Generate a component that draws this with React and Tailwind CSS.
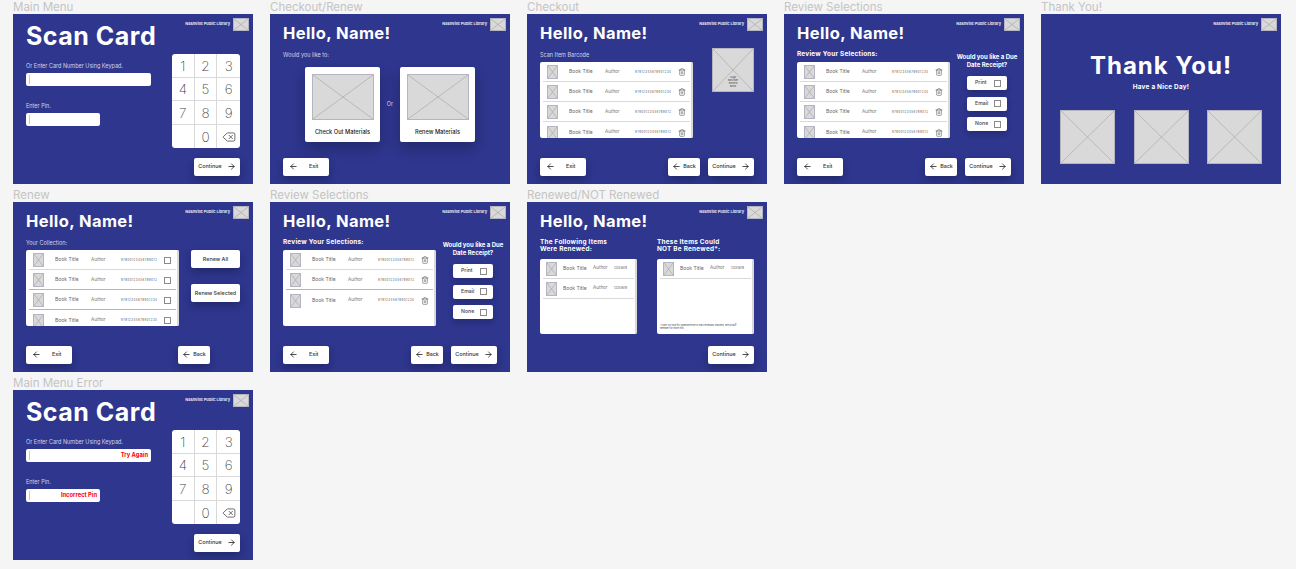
import { ArrowLeft, ArrowRight, Delete, Trash2 } from "lucide-react";

// gray box with a cross, the wireframe stand-in for an image
const Placeholder = ({ className = "" }) => (
    <div className={`relative shrink-0 bg-[#d9d9d9] border-[0.5px] border-[#b4b4c2] ${className}`}>
        <svg className="absolute inset-0 w-full h-full" viewBox="0 0 100 100" preserveAspectRatio="none">
            <path d="M0 0L100 100M100 0L0 100" stroke="#999" strokeWidth="0.5" vectorEffect="non-scaling-stroke" fill="none" />
        </svg>
    </div>
);

const Frame = ({ label, children }) => (
    <div>
        <div className="h-[13.5px] text-[11.5px] leading-[14px] text-[#c4c4c4] whitespace-nowrap">{label}</div>
        <div className="w-[240px] h-[170px] bg-[#2e368e] flex flex-col overflow-hidden">{children}</div>
    </div>
);

const Header = ({ title, big }) => (
    <div className="h-[36px] shrink-0 flex justify-between items-start pt-[4px] pr-[4px] pl-[13px]">
        {title ? (
            <h1 className={`font-bold text-white whitespace-nowrap ${big ? "mt-[5px] text-[25px] leading-[26px] tracking-[0.5px]" : "mt-[2.5px] text-[16.5px] leading-[26px] tracking-[0.4px]"}`}>
                {title}
            </h1>
        ) : (
            <span />
        )}
        <div className="flex items-center gap-[3px]">
            <span className="text-[3.9px] font-bold text-[#e4e5f2] whitespace-nowrap">Nashville Public Library</span>
            <Placeholder className="w-[16px] h-[13px]" />
        </div>
    </div>
);

const Btn = ({ children, className = "" }) => (
    <div className={`h-[18px] bg-white rounded-[2px] shadow-[0_4px_8px_rgba(0,0,0,0.25)] flex items-center text-[5.4px] font-medium text-[#333] whitespace-nowrap ${className}`}>
        {children}
    </div>
);

const Exit = () => (
    <Btn className="w-[46px] pl-[6px] gap-[11px]">
        <ArrowLeft size={9} strokeWidth={2} color="#111" />
        Exit
    </Btn>
);

const Back = () => (
    <Btn className="w-[32px] justify-center gap-[2px]">
        <ArrowLeft size={9} strokeWidth={2} color="#111" />
        Back
    </Btn>
);

const Continue = () => (
    <Btn className="w-[46px] justify-center gap-[5px]">
        Continue
        <ArrowRight size={9} strokeWidth={2} color="#111" />
    </Btn>
);

const Footer = ({ left, children }) => (
    <div className="h-[34px] shrink-0 px-[13px] pt-[8px] mt-auto flex justify-between">
        {left ? <Exit /> : <span />}
        <div className="flex gap-[8px]">{children}</div>
    </div>
);

const Label = ({ children, className = "" }) => (
    <p className={`text-[5.5px] leading-[6px] text-[#d4d5e8] whitespace-nowrap ${className}`}>{children}</p>
);

const Heading = ({ children, className = "" }) => (
    <p className={`text-[6.4px] font-bold text-white tracking-[0.25px] whitespace-nowrap ${className}`}>{children}</p>
);

const Check = () => <div className="w-[7px] h-[7px] bg-white border-[0.5px] border-[#8a8a8a] shrink-0" />;

const ListRow = ({ end, code, strong, noLine }) => (
    <div className={`h-[20px] shrink-0 pt-[1px] flex items-center pl-[4px] ${noLine ? "" : strong ? "border-b border-[#b5b5b5]" : "border-b border-[#d9d9d9]"}`}>
        <Placeholder className="w-[11px] h-[14px]" />
        <span className="w-[22px] ml-[11px] mr-[14px] text-[5px] text-[#666] whitespace-nowrap">Book Title</span>
        <span className="w-[16px] mr-[14px] text-[4.6px] text-[#777] whitespace-nowrap">Author</span>
        <span className="w-[37px] mr-[6px] text-[2.8px] tracking-[0.5px] text-[#555] whitespace-nowrap">{code}</span>
        {end === "check" ? <Check /> : <Trash2 size={8} strokeWidth={1.4} color="#333" />}
    </div>
);

const List = ({ children, className = "" }) => (
    <div className={`bg-white rounded-[2px] overflow-hidden flex shrink-0 ${className}`}>
        <div className="flex-1 min-w-0 flex flex-col pl-[3px] pr-[1px]">{children}</div>
        <div className="w-[2px] bg-[#d9d9d9]" />
    </div>
);

const codeA = "97812345678901234";
const codeB = "97800123456789012";

const ScanCard = ({ error }) => (
    <>
        <Header title="Scan Card" big />
        <div className="flex-1 min-h-0 px-[13px] flex justify-between items-start">
            <div className="pt-[13.5px]">
                <Label>Or Enter Card Number Using Keypad.</Label>
                <div className="w-[125px] h-[13px] mt-[4px] bg-white rounded-[2px] flex items-center justify-between pl-[3px] pr-[3px]">
                    <div className="w-[1px] h-[9px] bg-[#c8c8c8]" />
                    {error && <span className="text-[5.8px] font-bold text-[#ff0000]">Try Again</span>}
                </div>
                <Label className="mt-[17px]">Enter Pin.</Label>
                <div className="w-[74px] h-[13px] mt-[4px] bg-white rounded-[2px] flex items-center justify-between pl-[3px] pr-[3px]">
                    <div className="w-[1px] h-[9px] bg-[#c8c8c8]" />
                    {error && <span className="text-[5.8px] font-bold text-[#ff0000]">Incorrect Pin</span>}
                </div>
            </div>
            <div className="mt-[4.5px] w-[68px] h-[94px] bg-white rounded-[3px] overflow-hidden grid grid-cols-3 grid-rows-4">
                {["1", "2", "3", "4", "5", "6", "7", "8", "9", "", "0", "x"].map((k, i) => (
                    <div key={i} className={`flex items-center justify-center pt-[1.5px] text-[13.5px] font-extralight text-[#444] border-[#d9d9d9] ${i % 3 !== 2 ? "border-r-[0.5px]" : ""} ${i < 9 ? "border-b-[0.5px]" : ""}`}>
                        {k === "x" ? <Delete size={14} strokeWidth={1.2} color="#333" /> : k}
                    </div>
                ))}
            </div>
        </div>
        <Footer>
            <Continue />
        </Footer>
    </>
);

const PickCard = ({ text }) => (
    <div className="w-[75px] h-[75px] bg-white rounded-[2px] shadow-[0_6px_14px_rgba(0,0,0,0.25)] px-[6.5px] pt-[6.5px] flex flex-col items-center">
        <Placeholder className="w-[62px] h-[46px]" />
        <span className="mt-[8px] text-[5.7px] font-medium text-[#222] whitespace-nowrap">{text}</span>
    </div>
);

const ReceiptOption = ({ text }) => (
    <div className="w-[40px] h-[14px] bg-white rounded-[2px] shadow-[0_3px_6px_rgba(0,0,0,0.2)] flex items-center justify-between pl-[8px] pr-[6px] text-[5.2px] font-medium text-[#444]">
        {text}
        <Check />
    </div>
);

const Receipt = () => (
    <div className="w-[62px] -mr-[7px] pt-[3px] flex flex-col items-center">
        <Heading className="text-center text-[6px] tracking-normal leading-[8px]">
            Would you like a Due
            <br />
            Date Receipt?
        </Heading>
        <div className="mt-[7.5px] flex flex-col gap-[6.5px]">
            <ReceiptOption text="Print" />
            <ReceiptOption text="Email" />
            <ReceiptOption text="None" />
        </div>
    </div>
);

const ReviewBody = ({ children }) => (
    <div className="h-[104px] px-[13px] flex justify-between items-start">
        <div className="pt-[1.5px]">
            <Heading className="h-[11px] leading-[7.5px]">Review Your Selections:</Heading>
            <List className="w-[153px] h-[76px]">{children}</List>
        </div>
        <Receipt />
    </div>
);

const RenewedRow = ({ code }) => (
    <div className="h-[20px] shrink-0 pt-[1px] flex items-center pl-[3px] border-b border-[#d9d9d9]">
        <Placeholder className="w-[11px] h-[14px]" />
        <span className="w-[22px] ml-[6px] mr-[8px] text-[5px] text-[#666] whitespace-nowrap">Book Title</span>
        <span className="w-[13px] mr-[8px] text-[4.6px] text-[#777] whitespace-nowrap">Author</span>
        <span className="w-[15px] text-[2.8px] text-[#555] whitespace-nowrap">{code}</span>
    </div>
);

export default function App() {
    return (
        <div className="w-[1296px] h-[569px] overflow-hidden bg-[#f5f5f5] pl-[13px] antialiased [font-family:Inter,sans-serif]">
            <div className="grid grid-cols-[repeat(5,240px)] gap-x-[17px] gap-y-[4.5px] items-start">
                <Frame label="Main Menu">
                    <ScanCard />
                </Frame>

                <Frame label="Checkout/Renew">
                    <Header title="Hello, Name!" />
                    <div className="flex-1 min-h-0 px-[13px]">
                        <Label className="mt-[2.5px]">Would you like to:</Label>
                        <div className="mt-[9px] flex items-center justify-center gap-[6px]">
                            <PickCard text="Check Out Materials" />
                            <span className="w-[8px] text-center text-[5.5px] text-[#d4d5e8]">Or</span>
                            <PickCard text="Renew Materials" />
                        </div>
                    </div>
                    <Footer left />
                </Frame>

                <Frame label="Checkout">
                    <Header title="Hello, Name!" />
                    <div className="flex-1 min-h-0 px-[13px] flex justify-between items-start">
                        <div className="pt-[2.5px]">
                            <Label className="h-[10px]">Scan Item Barcode</Label>
                            <List className="w-[153px] h-[76px]">
                                <ListRow code={codeA} />
                                <ListRow code={codeA} />
                                <ListRow code={codeB} />
                                <ListRow code={codeB} noLine />
                            </List>
                        </div>
                        <div className="relative w-[42px] h-[44px] -mt-[1.5px]">
                            <Placeholder className="w-full h-full" />
                            <p className="absolute bottom-[4px] inset-x-0 text-center text-[2.6px] leading-[3px] text-[#444]">
                                Logo
                                <br />
                                Barcode
                                <br />
                                Behind
                                <br />
                                Book
                            </p>
                        </div>
                    </div>
                    <Footer left>
                        <Back />
                        <Continue />
                    </Footer>
                </Frame>

                <Frame label="Review Selections">
                    <Header title="Hello, Name!" />
                    <ReviewBody>
                        <ListRow code={codeA} />
                        <ListRow code={codeA} />
                        <ListRow code={codeB} />
                        <ListRow code={codeB} noLine />
                    </ReviewBody>
                    <Footer left>
                        <Back />
                        <Continue />
                    </Footer>
                </Frame>

                <Frame label="Thank You!">
                    <Header />
                    <div className="flex flex-col items-center">
                        <h1 className="text-[24px] leading-[32px] font-bold tracking-[1px] text-white whitespace-nowrap">Thank You!</h1>
                        <Heading className="mt-[1px] leading-[9px]">Have a Nice Day!</Heading>
                        <div className="mt-[18px] flex gap-[18.5px]">
                            <Placeholder className="w-[55px] h-[54px]" />
                            <Placeholder className="w-[55px] h-[54px]" />
                            <Placeholder className="w-[55px] h-[54px]" />
                        </div>
                    </div>
                </Frame>

                <Frame label="Renew">
                    <Header title="Hello, Name!" />
                    <div className="flex-1 min-h-0 px-[13px] flex justify-between items-start">
                        <div className="pt-[2.5px]">
                            <Label className="h-[10px]">Your Collection:</Label>
                            <List className="w-[153px] h-[76px]">
                                <ListRow code={codeB} end="check" />
                                <ListRow code={codeB} end="check" strong />
                                <ListRow code={codeA} end="check" strong />
                                <ListRow code={codeA} end="check" noLine />
                            </List>
                        </div>
                        <div className="pt-[12.5px] flex flex-col gap-[16px]">
                            <Btn className="w-[49px] justify-center">Renew All</Btn>
                            <Btn className="w-[49px] justify-center">Renew Selected</Btn>
                        </div>
                    </div>
                    <Footer left>
                        <Back />
                        <span className="w-[22px]" />
                    </Footer>
                </Frame>

                <Frame label="Review Selections">
                    <Header title="Hello, Name!" />
                    <ReviewBody>
                        <ListRow code={codeB} />
                        <ListRow code={codeB} strong />
                        <ListRow code={codeA} noLine />
                    </ReviewBody>
                    <Footer left>
                        <Back />
                        <Continue />
                    </Footer>
                </Frame>

                <Frame label="Renewed/NOT Renewed">
                    <Header title="Hello, Name!" />
                    <div className="flex-1 min-h-0 px-[13px] flex justify-between items-start">
                        <div className="pt-[1px]">
                            <Heading className="h-[20px] leading-[7.5px]">
                                The Following Items
                                <br />
                                Were Renewed:
                            </Heading>
                            <List className="w-[97px] h-[75px]">
                                <RenewedRow code="12345678" />
                                <RenewedRow code="12345678" />
                            </List>
                        </div>
                        <div className="pt-[1px]">
                            <Heading className="h-[20px] leading-[7.5px]">
                                These Items Could
                                <br />
                                NOT Be Renewed*:
                            </Heading>
                            <List className="w-[97px] h-[75px]">
                                <RenewedRow code="12345678" />
                                <p className="mt-auto mb-[4px] pr-[14px] text-[2.3px] leading-[3px] text-[#444]">
                                    *Likely on hold for someone else or max renewals reached, see a staff member for more info.
                                </p>
                            </List>
                        </div>
                    </div>
                    <Footer>
                        <Continue />
                    </Footer>
                </Frame>

                <div />
                <div />

                <Frame label="Main Menu Error">
                    <ScanCard error />
                </Frame>
            </div>
        </div>
    );
}
